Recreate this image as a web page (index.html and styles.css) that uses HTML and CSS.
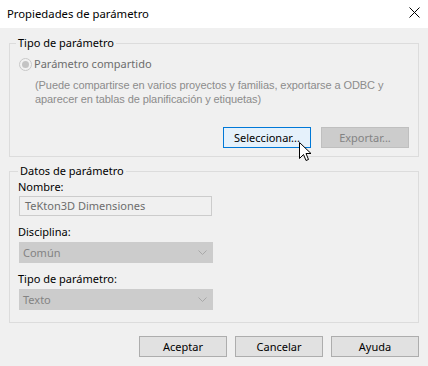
FILE: index.html
```html
<!DOCTYPE html>
<html lang="es">
<head>
<meta charset="utf-8">
<title>Propiedades de parámetro</title>
<link rel="stylesheet" href="styles.css">
</head>
<body>
<div class="dialog">
  <div class="titlebar">
    <span class="title">Propiedades de parámetro</span>
    <svg class="close" width="11" height="11" viewBox="0 0 11 11"><path d="M0.5 0.5 L10.5 10.5 M10.5 0.5 L0.5 10.5" stroke="#000" stroke-width="1" fill="none"/></svg>
  </div>
  <div class="body">
    <fieldset class="group group-type">
      <legend>Tipo de parámetro</legend>
      <div class="radio-row">
        <svg class="radio" width="13" height="13" viewBox="0 0 13 13"><circle cx="6.5" cy="6.5" r="6" fill="#f2f2f2" stroke="#c8c8c8"/><circle cx="6.5" cy="6.5" r="3.5" fill="#c4c4c4"/></svg>
        <span class="radio-label">Parámetro compartido</span>
      </div>
      <p class="desc">(Puede compartirse en varios proyectos y familias, exportarse a ODBC y<br>aparecer en tablas de planificación y etiquetas)</p>
      <div class="group-buttons">
        <div class="btn btn-hover">Seleccionar...</div>
        <div class="btn btn-disabled">Exportar...</div>
        <svg class="cursor" width="13" height="20" viewBox="0 0 13 20"><path d="M0.5 0.5 L0.5 16.5 L4.5 12.5 L7 18.5 L9.5 17.5 L7 11.5 L12 11.5 Z" fill="#fff" stroke="#000" stroke-width="1" stroke-linejoin="miter"/></svg>
      </div>
    </fieldset>
    <fieldset class="group group-data">
      <legend>Datos de parámetro</legend>
      <div class="label first">Nombre:</div>
      <div class="textbox">TeKton3D Dimensiones</div>
      <div class="label">Disciplina:</div>
      <div class="combo"><span>Común</span><svg width="9" height="5" viewBox="0 0 9 5"><path d="M0.5 0.5 L4.5 4.5 L8.5 0.5" stroke="#a8a8a8" fill="none"/></svg></div>
      <div class="label">Tipo de parámetro:</div>
      <div class="combo"><span>Texto</span><svg width="9" height="5" viewBox="0 0 9 5"><path d="M0.5 0.5 L4.5 4.5 L8.5 0.5" stroke="#a8a8a8" fill="none"/></svg></div>
    </fieldset>
    <div class="footer">
      <div class="btn">Aceptar</div>
      <div class="btn">Cancelar</div>
      <div class="btn">Ayuda</div>
    </div>
  </div>
</div>
</body>
</html>
```
FILE: styles.css
```css
* { box-sizing: border-box; }
html, body { margin: 0; padding: 0; }
body {
  width: 428px;
  height: 366px;
  overflow: hidden;
  background: #f0f0f0;
  font-family: "Noto Sans", "Liberation Sans", sans-serif;
  font-size: 11px;
  color: #000;
}
.titlebar {
  height: 28px;
  background: #fff;
  display: flex;
  align-items: center;
  justify-content: space-between;
  padding: 0 8px 0 7px;
}
.title { font-size: 11.3px; line-height: 16px; padding-bottom: 1px; }
.close { display: block; margin-bottom: 3px; }
.body { padding: 8px 9px 0 9px; }
.group {
  margin: 0;
  border: 1px solid #dcdcdc;
  padding: 0 9px 8px 6px;
  min-width: 0;
}
.group legend {
  padding: 0 2px;
  line-height: 14px;
  margin-left: 0;
}
.radio-row {
  display: flex;
  align-items: center;
  height: 14px;
  margin-top: 7px;
  padding-left: 3px;
}
.radio { display: block; margin-right: 2px; }
.radio-label { color: #6d6d6d; line-height: 14px; }
.desc {
  margin: 7px 0 0 19px;
  font-family: "Liberation Sans", sans-serif;
  font-size: 11px;
  letter-spacing: -0.08px;
  line-height: 14px;
  color: #8c8c8c;
}
.group-buttons {
  position: relative;
  display: flex;
  justify-content: flex-end;
  gap: 10px;
  margin-top: 21px;
}
.btn {
  width: 88px;
  height: 21px;
  border: 1px solid #adadad;
  background: #e1e1e1;
  display: flex;
  align-items: center;
  justify-content: center;
  line-height: 14px;
}
.btn-hover { background: #e5f1fb; border-color: #0078d7; }
.btn-disabled { background: #cccccc; border-color: #bfbfbf; color: #838383; }
.cursor { position: absolute; left: 283px; top: 15px; }
.group-data {
  margin-top: 7px;
  padding: 0 9px 12px 8px;
}
.label { line-height: 14px; margin-top: 9px; }
.label.first { margin-top: 2px; }
.textbox {
  margin: 2px 0 0 1px;
  width: 193px;
  height: 20px;
  border: 1px solid #cccccc;
  background: #f0f0f0;
  color: #6d6d6d;
  padding-left: 5px;
  line-height: 18px;
}
.combo {
  margin: 3px 0 0 1px;
  width: 194px;
  height: 21px;
  background: #cccccc;
  border: 1px solid #cccccc;
  color: #838383;
  display: flex;
  align-items: center;
  justify-content: space-between;
  padding: 0 5px 0 3px;
}
.combo svg { display: block; }
.footer {
  display: flex;
  justify-content: flex-end;
  gap: 8px;
  margin-top: 13px;
}
```
